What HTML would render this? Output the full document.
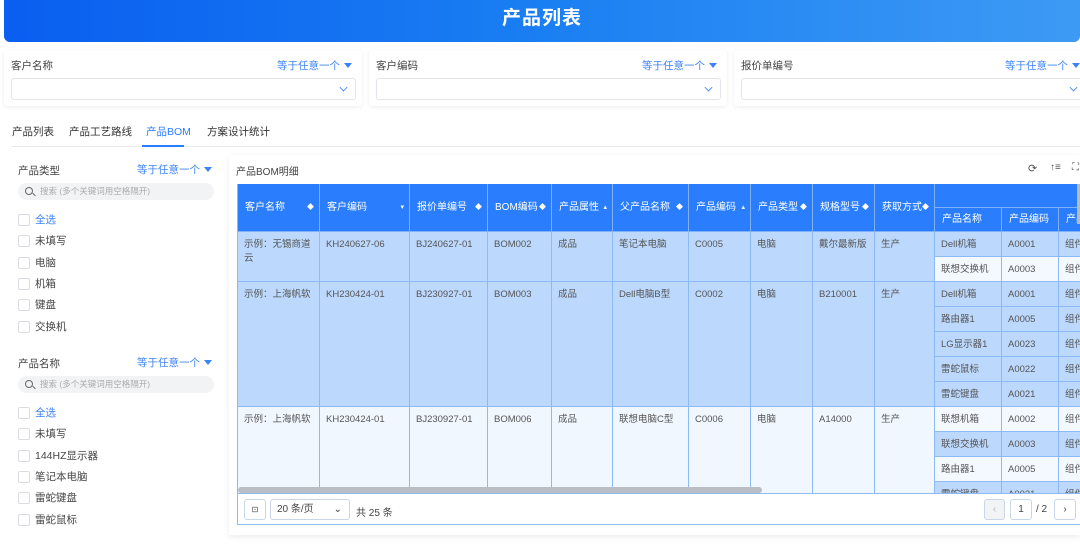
<!DOCTYPE html>
<html><head><meta charset="utf-8"><style>
*{box-sizing:border-box;margin:0;padding:0}
body{width:1080px;height:545px;overflow:hidden;background:#fff;font-family:"Liberation Sans","Noto Sans CJK SC",sans-serif;font-size:10px;color:#444;position:relative}
.abs{position:absolute}
.banner{left:4px;top:0;width:1076px;height:42px;border-radius:0 0 6px 6px;background:linear-gradient(90deg,#0a5ef0 0%,#1a7ff2 50%,#3d9af4 100%);color:#fff;font-size:19px;font-weight:bold;text-align:center;line-height:38px;letter-spacing:1px}
.fcard{top:50px;height:56px;background:#fff;box-shadow:0 1px 4px rgba(0,0,0,.08);border-radius:3px}
.fcard .lab{position:absolute;left:7px;top:8px;font-size:10.5px;color:#444}
.fcard .op{position:absolute;right:10px;top:8px;font-size:10.5px;color:#3b82f6}
.fcard .in{position:absolute;left:7px;right:6px;top:28px;height:22px;border:1px solid #e2e5ea;border-radius:3px}
.chev{position:absolute;right:8px;top:5px;width:7px;height:7px;border-right:1.3px solid #3b82f6;border-bottom:1.3px solid #3b82f6;transform:rotate(45deg) scale(.8)}
.tri{display:inline-block;width:0;height:0;border-left:4px solid transparent;border-right:4px solid transparent;border-top:5px solid #3b82f6;margin-left:4px;vertical-align:1px}
.tabs{left:12px;top:124px;font-size:10.5px;color:#333}
.tabs span{position:absolute;white-space:nowrap}
.fl .t{position:absolute;font-size:10.5px;color:#444}
.fl .op{position:absolute;font-size:10.5px;color:#3b82f6}
.search{position:absolute;left:18px;width:196px;height:17px;border-radius:9px;background:#f2f3f5;font-size:8.5px;color:#aaa;line-height:17px;padding-left:22px}
.search:before{content:"";position:absolute;left:7px;top:4px;width:6px;height:6px;border:1.2px solid #666;border-radius:50%}
.search:after{content:"";position:absolute;left:14px;top:11px;width:4px;height:1.2px;background:#666;transform:rotate(45deg)}
.cb{position:absolute;left:18px;font-size:10.5px;color:#444;padding-left:17px;line-height:12px}
.cb:before{content:"";position:absolute;left:0;top:0;width:10px;height:10px;border:1px solid #d9dce1;border-radius:2px}
.card{left:229px;top:155px;width:851px;height:380px;background:#fff;box-shadow:0 2px 6px rgba(0,0,0,.08)}
.c{position:absolute;border-right:1px solid #8cbaf7;border-bottom:1px solid #8cbaf7;padding:6px 6px;font-size:9.5px;color:#555;line-height:14px;overflow:hidden;white-space:nowrap}
.h{position:absolute;background:#2a7dfd;color:#fff;border-right:1px solid #7fb0fb;border-bottom:1px solid #7fb0fb;font-size:10px;padding:0 7px;overflow:hidden;white-space:nowrap}
.pg{position:absolute;border:1px solid #c9d6ea;border-radius:3px;background:#fff;font-size:10px;color:#444;text-align:center}
</style></head><body>
<div class="abs banner">产品列表</div>

<div class="abs fcard" style="left:4px;width:358px"><div class="lab">客户名称</div><div class="op">等于任意一个<span class="tri"></span></div><div class="in"><div class="chev"></div></div></div>
<div class="abs fcard" style="left:369px;width:358px"><div class="lab">客户编码</div><div class="op">等于任意一个<span class="tri"></span></div><div class="in"><div class="chev"></div></div></div>
<div class="abs fcard" style="left:734px;width:350px"><div class="lab">报价单编号</div><div class="op" style="right:4px">等于任意一个<span class="tri"></span></div><div class="in" style="right:-2px"><div class="chev"></div></div></div>

<div class="abs tabs">
<span style="left:0;top:0">产品列表</span><span style="left:57px;top:0">产品工艺路线</span><span style="left:134px;top:0;color:#2a7dfd">产品BOM</span><span style="left:195px;top:0">方案设计统计</span>
</div>
<div class="abs" style="left:12px;top:146px;width:1068px;height:1px;background:#e6e8eb"></div>
<div class="abs" style="left:142px;top:145px;width:42px;height:2px;background:#2a7dfd"></div>

<div class="fl">
<div class="t" style="left:18px;top:163px">产品类型</div><div class="op" style="left:137px;top:162px">等于任意一个<span class="tri"></span></div>
<div class="search" style="top:183px">搜索 (多个关键词用空格隔开)</div>
<div class="cb" style="top:214px;color:#3b82f6">全选</div>
<div class="cb" style="top:235px">未填写</div>
<div class="cb" style="top:257px">电脑</div>
<div class="cb" style="top:278px">机箱</div>
<div class="cb" style="top:299px">键盘</div>
<div class="cb" style="top:321px">交换机</div>
<div class="t" style="left:18px;top:356px">产品名称</div><div class="op" style="left:137px;top:355px">等于任意一个<span class="tri"></span></div>
<div class="search" style="top:376px">搜索 (多个关键词用空格隔开)</div>
<div class="cb" style="top:407px;color:#3b82f6">全选</div>
<div class="cb" style="top:428px">未填写</div>
<div class="cb" style="top:450px">144HZ显示器</div>
<div class="cb" style="top:471px">笔记本电脑</div>
<div class="cb" style="top:492px">雷蛇键盘</div>
<div class="cb" style="top:514px">雷蛇鼠标</div>
</div>

<div class="abs card"></div>
<div class="abs" style="left:236px;top:163px;font-size:10px;color:#444">产品BOM明细</div>
<div class="abs" style="left:1028px;top:162px;font-size:11px;color:#555">⟳</div>
<div class="abs" style="left:1050px;top:162px;font-size:10px;color:#555">↑≡</div>
<div class="abs" style="left:1072px;top:162px;font-size:10px;color:#555">⛶</div>

<div class="abs" style="left:237px;top:184px;width:843px;height:310px;overflow:hidden;border-left:1px solid #8cbaf7">
<div id="t" style="position:relative"></div>
</div>
<script>
var cols=[0,82,172,250,314,375,451,513,575,637,697,764,821,880];
var hd=["客户名称","客户编码","报价单编号","BOM编码","产品属性","父产品名称","产品编码","产品类型","规格型号","获取方式"];
var so=["◆","▾","◆","◆","▴","◆","▴","◆","◆","◆"];
var h="";
for(var i=0;i<10;i++){h+='<div class="h" style="left:'+cols[i]+'px;top:0;width:'+(cols[i+1]-cols[i])+'px;height:48px;line-height:48px">'+hd[i]+'<span style="position:absolute;right:5px;font-size:7px">'+so[i]+'</span></div>';}
h+='<div class="h" style="left:697px;top:0;width:200px;height:24px"></div>';
var sh=["产品名称","产品编码","产品"];
for(var i=0;i<3;i++)h+='<div class="h" style="left:'+cols[10+i]+'px;top:24px;width:'+(cols[11+i]-cols[10+i])+'px;height:24px;line-height:24px">'+sh[i]+'</div>';
var rows=[
{t:48,h:50,bg:"#bcd8fc",v:["示例：无锡商道<br>云","KH240627-06","BJ240627-01","BOM002","成品","笔记本电脑","C0005","电脑","戴尔最新版","生产"],sub:[["Dell机箱","A0001",1],["联想交换机","A0003",0]]},
{t:98,h:125,bg:"#bcd8fc",v:["示例：上海帆软","KH230424-01","BJ230927-01","BOM003","成品","Dell电脑B型","C0002","电脑","B210001","生产"],sub:[["Dell机箱","A0001",1],["路由器1","A0005",1],["LG显示器1","A0023",1],["雷蛇鼠标","A0022",1],["雷蛇键盘","A0021",1]]},
{t:223,h:100,bg:"#f1f7ff",v:["示例：上海帆软","KH230424-01","BJ230927-01","BOM006","成品","联想电脑C型","C0006","电脑","A14000","生产"],sub:[["联想机箱","A0002",0],["联想交换机","A0003",1],["路由器1","A0005",0],["雷蛇键盘","A0021",1]]}];
rows.forEach(function(r){
for(var i=0;i<10;i++)h+='<div class="c" style="left:'+cols[i]+'px;top:'+r.t+'px;width:'+(cols[i+1]-cols[i])+'px;height:'+r.h+'px;background:'+r.bg+';'+(i==0?'white-space:normal':'')+'">'+r.v[i]+'</div>';
r.sub.forEach(function(s,k){var bg=s[2]?"#bcd8fc":"#f4f8ff";var y=r.t+k*25;
h+='<div class="c" style="left:697px;top:'+y+'px;width:67px;height:25px;background:'+bg+'">'+s[0]+'</div>';
h+='<div class="c" style="left:764px;top:'+y+'px;width:57px;height:25px;background:'+bg+'">'+s[1]+'</div>';
h+='<div class="c" style="left:821px;top:'+y+'px;width:59px;height:25px;background:'+bg+'">组件</div>';});
});
h+='<div style="position:absolute;left:0;top:303px;width:524px;height:6px;border-radius:3px;background:#b9bdc4"></div>';
h+='<div style="position:absolute;left:839px;top:0;width:4px;height:40px;background:#bbb"></div>';
document.getElementById("t").innerHTML=h;
</script>
<div class="abs" style="left:237px;top:493px;width:843px;height:32px;background:#fff;border:1px solid #8cbaf7;border-right:none"></div>
<div class="pg" style="left:244px;top:499px;width:22px;height:21px;line-height:19px;font-size:8px">⊡</div>
<div class="pg" style="left:270px;top:499px;width:80px;height:21px;line-height:19px;text-align:left;padding-left:6px">20 条/页<span style="position:absolute;right:7px;top:0">⌄</span></div>
<div class="abs" style="left:356px;top:504px;font-size:10px;color:#444">共 25 条</div>
<div class="pg" style="left:984px;top:499px;width:21px;height:21px;line-height:19px;background:#f2f3f5;color:#bbb">‹</div>
<div class="pg" style="left:1010px;top:499px;width:22px;height:21px;line-height:19px">1</div>
<div class="abs" style="left:1036px;top:504px;font-size:10px;color:#444">/ 2</div>
<div class="pg" style="left:1054px;top:499px;width:22px;height:21px;line-height:19px">›</div>
</body></html>
